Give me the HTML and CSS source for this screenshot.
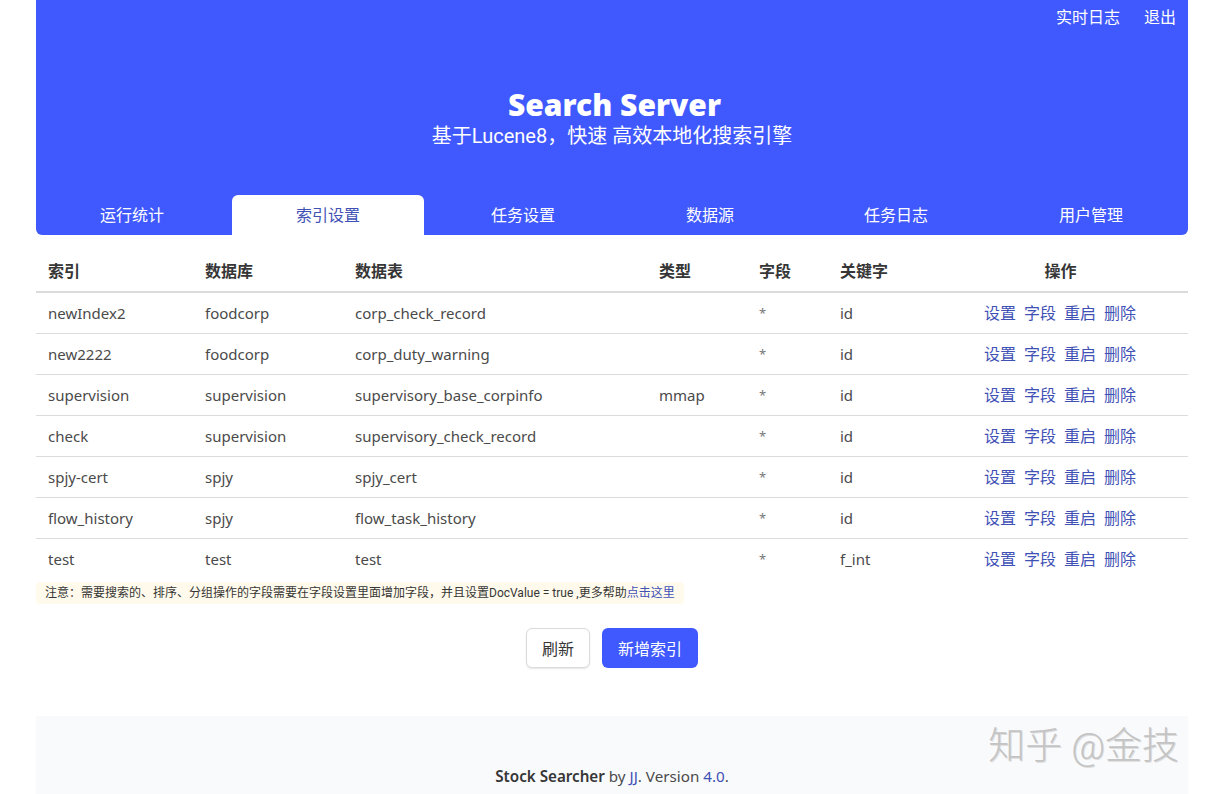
FILE: index.html
```html
<!DOCTYPE html>
<html lang="zh-CN">

<head>
    <meta charset="UTF-8">
    <title>Search Server</title>
    <link rel="stylesheet" href="styles.css">
</head>

<body>
    <div class="wrap">
        <section class="hero">
            <nav class="topnav">
                <a>实时日志</a>
                <a>退出</a>
            </nav>
            <div class="hero-body">
                <h1>Search Server</h1>
                <p>基于Lucene8，快速 高效本地化搜索引擎</p>
            </div>
            <ul class="tabs">
                <li>运行统计</li>
                <li class="active">索引设置</li>
                <li>任务设置</li>
                <li>数据源</li>
                <li>任务日志</li>
                <li>用户管理</li>
            </ul>
        </section>

        <table class="list">
            <colgroup>
                <col class="c-index">
                <col class="c-db">
                <col class="c-table">
                <col class="c-type">
                <col class="c-field">
                <col class="c-key">
                <col class="c-ops">
            </colgroup>
            <thead>
                <tr>
                    <th>索引</th>
                    <th>数据库</th>
                    <th>数据表</th>
                    <th>类型</th>
                    <th>字段</th>
                    <th>关键字</th>
                    <th class="ops-head">操作</th>
                </tr>
            </thead>
            <tbody>
                <tr>
                    <td>newIndex2</td>
                    <td>foodcorp</td>
                    <td>corp_check_record</td>
                    <td></td>
                    <td class="star">*</td>
                    <td>id</td>
                    <td class="ops"><a>设置</a><a>字段</a><a>重启</a><a>删除</a></td>
                </tr>
                <tr>
                    <td>new2222</td>
                    <td>foodcorp</td>
                    <td>corp_duty_warning</td>
                    <td></td>
                    <td class="star">*</td>
                    <td>id</td>
                    <td class="ops"><a>设置</a><a>字段</a><a>重启</a><a>删除</a></td>
                </tr>
                <tr>
                    <td>supervision</td>
                    <td>supervision</td>
                    <td>supervisory_base_corpinfo</td>
                    <td>mmap</td>
                    <td class="star">*</td>
                    <td>id</td>
                    <td class="ops"><a>设置</a><a>字段</a><a>重启</a><a>删除</a></td>
                </tr>
                <tr>
                    <td>check</td>
                    <td>supervision</td>
                    <td>supervisory_check_record</td>
                    <td></td>
                    <td class="star">*</td>
                    <td>id</td>
                    <td class="ops"><a>设置</a><a>字段</a><a>重启</a><a>删除</a></td>
                </tr>
                <tr>
                    <td>spjy-cert</td>
                    <td>spjy</td>
                    <td>spjy_cert</td>
                    <td></td>
                    <td class="star">*</td>
                    <td>id</td>
                    <td class="ops"><a>设置</a><a>字段</a><a>重启</a><a>删除</a></td>
                </tr>
                <tr>
                    <td>flow_history</td>
                    <td>spjy</td>
                    <td>flow_task_history</td>
                    <td></td>
                    <td class="star">*</td>
                    <td>id</td>
                    <td class="ops"><a>设置</a><a>字段</a><a>重启</a><a>删除</a></td>
                </tr>
                <tr>
                    <td>test</td>
                    <td>test</td>
                    <td>test</td>
                    <td></td>
                    <td class="star">*</td>
                    <td>f_int</td>
                    <td class="ops"><a>设置</a><a>字段</a><a>重启</a><a>删除</a></td>
                </tr>
            </tbody>
        </table>

        <div class="note">注意：需要搜索的、排序、分组操作的字段需要在字段设置里面增加字段，并且设置DocValue = true ,更多帮助<a>点击这里</a></div>

        <div class="buttons">
            <button class="btn">刷新</button>
            <button class="btn primary">新增索引</button>
        </div>

        <footer>
            <p><strong>Stock Searcher</strong> by <a>JJ</a>. Version <a>4.0</a>.</p>
            <div class="watermark">知乎 @金技</div>
        </footer>
    </div>
</body>

</html>
```

FILE: styles.css
```css
* {
    box-sizing: border-box;
}

html,
body {
    margin: 0;
    padding: 0;
    background-color: white;
}

body {
    font-family: "Noto Sans", "Noto Sans CJK SC", sans-serif;
    font-size: 16px;
    line-height: 24px;
    color: #4a4a4a;
}

a {
    color: #3f51b5;
}

.wrap {
    width: 1152px;
    margin-left: 36px;
}

.hero {
    background-color: #4059ff;
    color: white;
    border-radius: 0 0 6px 6px;
}

.topnav {
    height: 39px;
    display: flex;
    justify-content: flex-end;
    gap: 24px;
    padding: 5px 12px 0 0;
}

.topnav a {
    color: white;
}

.hero-body {
    padding: 48px 0 46px;
    text-align: center;
}

.hero-body h1 {
    margin: 0;
    padding-left: 5px;
    font-size: 30px;
    line-height: 36px;
    font-weight: 900;
}

.hero-body p {
    margin: 0;
    font-family: Roboto, "Noto Sans CJK SC", sans-serif;
    font-size: 20px;
    line-height: 26px;
}

.tabs {
    list-style: none;
    margin: 0;
    padding: 0;
    display: grid;
    grid-template-columns: 192px 192px 190px 176px 188px 194px;
    gap: 4px;
}

.tabs li {
    height: 40px;
    padding-top: 8px;
    text-align: center;
    border-radius: 6px 6px 0 0;
}

.tabs .active {
    background-color: white;
    color: #3f51b5;
}

.list {
    width: 100%;
    margin-top: 16px;
    table-layout: fixed;
    border-collapse: separate;
    border-spacing: 0;
}

.c-index {
    width: 157px;
}

.c-db {
    width: 150px;
}

.c-table {
    width: 304px;
}

.c-type {
    width: 100px;
}

.c-field {
    width: 81px;
}

.c-key {
    width: 144px;
}

.list th,
.list td {
    padding: 8px 12px;
    text-align: left;
    vertical-align: top;
    border-bottom: 1px solid #dbdbdb;
}

.list td {
    font-size: 15px;
}

.list th {
    color: #363636;
    font-weight: 600;
    border-bottom-width: 2px;
}

.list tbody tr:last-child td {
    border-bottom: 0;
}

.list .star {
    font-size: 13px;
    color: #777;
}

.list .ops-head {
    text-align: center;
    padding-right: 51px;
}

.list .ops {
    font-size: 16px;
}

.ops a {
    margin-right: 8px;
}

.note {
    display: table;
    margin-top: 3px;
    padding: 0 9px;
    font-family: Roboto, "Noto Sans CJK SC", sans-serif;
    font-size: 12px;
    line-height: 22px;
    color: #363636;
    background-color: #fffaeb;
    border-radius: 4px;
}

.buttons {
    margin-top: 24px;
    display: flex;
    justify-content: center;
    gap: 12px;
}

.btn {
    height: 40px;
    padding: 0 15px;
    font-family: inherit;
    font-size: 16px;
    color: #363636;
    background-color: white;
    border: 1px solid #dbdbdb;
    border-radius: 6px;
    box-shadow: 0 1px 2px rgba(0, 0, 0, 0.1);
}

.btn.primary {
    color: white;
    background-color: #4059ff;
    border-color: transparent;
    box-shadow: none;
}

footer {
    position: relative;
    margin-top: 48px;
    padding: 48px 0 6px;
    text-align: center;
    background-color: #f9fafc;
}

footer p {
    margin: 0;
    font-size: 15.2px;
}

footer strong {
    color: #363636;
    font-weight: 600;
}

.watermark {
    position: absolute;
    top: 10px;
    right: 9px;
    font-family: Roboto, "Noto Sans CJK SC", sans-serif;
    font-size: 37px;
    font-weight: 300;
    line-height: 42px;
    color: #c4c4c4;
    text-shadow: 1px 1px 0 #ddd;
}
```
